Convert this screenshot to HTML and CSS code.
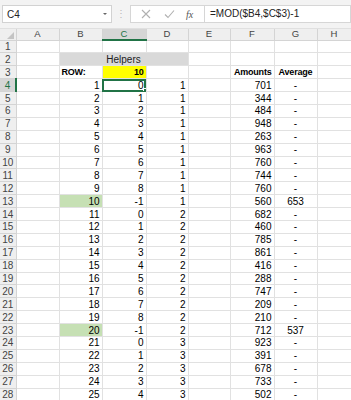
FILE: index.html
```html
<!DOCTYPE html>
<html>
<head>
<meta charset="utf-8">
<link rel="stylesheet" href="styles.css">
</head>
<body>
<div class="fbar">
  <div class="namebox"><span>C4</span><span class="caret"></span></div>
  <div class="dots">⋮</div>
  <div class="fbox">
    <div class="icons">
      <svg class="ic" width="10" height="10" viewBox="0 0 10 10"><path d="M1 1L9 9M9 1L1 9" stroke="#b0b0b0" stroke-width="1.1" fill="none"/></svg>
      <svg class="ic" width="11" height="10" viewBox="0 0 11 10"><path d="M1 5.5L4 8.5L10 1.5" stroke="#b0b0b0" stroke-width="1.1" fill="none"/></svg>
      <span class="fx">fx</span>
    </div>
    <div class="formula">=MOD($B4,$C$3)-1</div>
  </div>
</div>
<table class="sheet">
  <colgroup>
    <col class="w-rh"><col class="w43"><col class="w43"><col class="w44"><col class="w42"><col class="w42"><col class="w44"><col class="w43"><col class="w34">
  </colgroup>
  <tr class="hdr"><th class="corner"></th><th>A</th><th>B</th><th class="csel">C</th><th>D</th><th>E</th><th>F</th><th>G</th><th>H</th></tr>
  <tr><th>1</th><td></td><td></td><td></td><td></td><td></td><td></td><td></td><td></td></tr>
  <tr><th>2</th><td></td><td colspan="3" class="helpers">Helpers</td><td></td><td></td><td></td><td></td></tr>
  <tr><th>3</th><td></td><td class="b">ROW:</td><td class="n b yel">10</td><td></td><td></td><td class="b r">Amounts</td><td class="b c">Average</td><td></td></tr>
  <tr><th class="rsel">4</th><td></td><td class="n">1</td><td class="n sel">0</td><td class="n">1</td><td></td><td class="n">701</td><td class="c">-</td><td></td></tr>
  <tr><th>5</th><td></td><td class="n">2</td><td class="n">1</td><td class="n">1</td><td></td><td class="n">344</td><td class="c">-</td><td></td></tr>
  <tr><th>6</th><td></td><td class="n">3</td><td class="n">2</td><td class="n">1</td><td></td><td class="n">484</td><td class="c">-</td><td></td></tr>
  <tr><th>7</th><td></td><td class="n">4</td><td class="n">3</td><td class="n">1</td><td></td><td class="n">948</td><td class="c">-</td><td></td></tr>
  <tr><th>8</th><td></td><td class="n">5</td><td class="n">4</td><td class="n">1</td><td></td><td class="n">263</td><td class="c">-</td><td></td></tr>
  <tr><th>9</th><td></td><td class="n">6</td><td class="n">5</td><td class="n">1</td><td></td><td class="n">963</td><td class="c">-</td><td></td></tr>
  <tr><th>10</th><td></td><td class="n">7</td><td class="n">6</td><td class="n">1</td><td></td><td class="n">760</td><td class="c">-</td><td></td></tr>
  <tr><th>11</th><td></td><td class="n">8</td><td class="n">7</td><td class="n">1</td><td></td><td class="n">744</td><td class="c">-</td><td></td></tr>
  <tr><th>12</th><td></td><td class="n">9</td><td class="n">8</td><td class="n">1</td><td></td><td class="n">760</td><td class="c">-</td><td></td></tr>
  <tr><th>13</th><td></td><td class="n grn">10</td><td class="n">-1</td><td class="n">1</td><td></td><td class="n">560</td><td class="c">653</td><td></td></tr>
  <tr><th>14</th><td></td><td class="n">11</td><td class="n">0</td><td class="n">2</td><td></td><td class="n">682</td><td class="c">-</td><td></td></tr>
  <tr><th>15</th><td></td><td class="n">12</td><td class="n">1</td><td class="n">2</td><td></td><td class="n">460</td><td class="c">-</td><td></td></tr>
  <tr><th>16</th><td></td><td class="n">13</td><td class="n">2</td><td class="n">2</td><td></td><td class="n">785</td><td class="c">-</td><td></td></tr>
  <tr><th>17</th><td></td><td class="n">14</td><td class="n">3</td><td class="n">2</td><td></td><td class="n">861</td><td class="c">-</td><td></td></tr>
  <tr><th>18</th><td></td><td class="n">15</td><td class="n">4</td><td class="n">2</td><td></td><td class="n">416</td><td class="c">-</td><td></td></tr>
  <tr><th>19</th><td></td><td class="n">16</td><td class="n">5</td><td class="n">2</td><td></td><td class="n">288</td><td class="c">-</td><td></td></tr>
  <tr><th>20</th><td></td><td class="n">17</td><td class="n">6</td><td class="n">2</td><td></td><td class="n">747</td><td class="c">-</td><td></td></tr>
  <tr><th>21</th><td></td><td class="n">18</td><td class="n">7</td><td class="n">2</td><td></td><td class="n">209</td><td class="c">-</td><td></td></tr>
  <tr><th>22</th><td></td><td class="n">19</td><td class="n">8</td><td class="n">2</td><td></td><td class="n">210</td><td class="c">-</td><td></td></tr>
  <tr><th>23</th><td></td><td class="n grn">20</td><td class="n">-1</td><td class="n">2</td><td></td><td class="n">712</td><td class="c">537</td><td></td></tr>
  <tr><th>24</th><td></td><td class="n">21</td><td class="n">0</td><td class="n">3</td><td></td><td class="n">923</td><td class="c">-</td><td></td></tr>
  <tr><th>25</th><td></td><td class="n">22</td><td class="n">1</td><td class="n">3</td><td></td><td class="n">391</td><td class="c">-</td><td></td></tr>
  <tr><th>26</th><td></td><td class="n">23</td><td class="n">2</td><td class="n">3</td><td></td><td class="n">678</td><td class="c">-</td><td></td></tr>
  <tr><th>27</th><td></td><td class="n">24</td><td class="n">3</td><td class="n">3</td><td></td><td class="n">733</td><td class="c">-</td><td></td></tr>
  <tr><th>28</th><td></td><td class="n">25</td><td class="n">4</td><td class="n">3</td><td></td><td class="n">502</td><td class="c">-</td><td></td></tr>
</table>
</body>
</html>
```
FILE: styles.css
```css
html, body {
  margin: 0;
  padding: 0;
  background: #ffffff;
  overflow: hidden;
}
body {
  width: 351px;
  height: 400px;
  font-family: "Liberation Sans", Arial, sans-serif;
  font-size: 10px;
  color: #000;
}
.fbar {
  height: 29px;
  box-sizing: border-box;
  background: #f3f3f3;
  display: flex;
  align-items: flex-start;
  padding-top: 5px;
  border-bottom: 1px solid #e0e0e0;
}
.namebox {
  margin-left: 2px;
  width: 110px;
  height: 18px;
  box-sizing: border-box;
  background: #fff;
  border: 1px solid #d2d2d2;
  display: flex;
  align-items: center;
  justify-content: space-between;
  padding: 0 4px 0 4px;
  font-size: 10px;
  color: #222;
}
.caret {
  width: 0;
  height: 0;
  border-left: 2px solid transparent;
  border-right: 2px solid transparent;
  border-top: 2px solid #666;
}
.dots {
  width: 18px;
  text-align: center;
  color: #b8b8b8;
  font-size: 10px;
  line-height: 18px;
}
.fbox {
  flex: 1;
  height: 18px;
  display: flex;
  align-items: stretch;
}
.icons {
  width: 74px;
  box-sizing: border-box;
  background: #fff;
  border: 1px solid #d6d6d6;
  border-right: none;
  display: flex;
  align-items: center;
  padding-left: 10px;
  gap: 13px;
}
.fx {
  font-family: "Liberation Serif", serif;
  font-style: italic;
  font-size: 10px;
  color: #555;
  margin-left: -2px;
}
.formula {
  flex: 1;
  box-sizing: border-box;
  background: #fff;
  border: 1px solid #d6d6d6;
  padding-left: 5px;
  line-height: 16px;
  font-size: 10px;
  color: #222;
}
.sheet {
  border-collapse: collapse;
  table-layout: fixed;
  width: 351px;
}
.w-rh { width: 16px; }
.w43 { width: 43px; }
.w44 { width: 44px; }
.w42 { width: 42px; }
.w34 { width: 34px; }
.sheet tr { height: 12.9px; }
.sheet tr.hdr { height: 11px; }
.sheet td, .sheet th {
  padding: 0 2px;
  height: 12.9px;
  line-height: 11px;
  border-right: 1px solid #e1e1e1;
  border-bottom: 1px solid #e1e1e1;
  white-space: nowrap;
  overflow: hidden;
  box-sizing: border-box;
  font-size: 10px;
}
.sheet th {
  background: #efefef;
  font-weight: normal;
  color: #444;
  text-align: center;
  border-right: 1px solid #d4d4d4;
  border-bottom: 1px solid #d4d4d4;
  padding: 0;
}
.sheet tr.hdr th {
  height: 11px;
  line-height: 10px;
  font-size: 9.5px;
}
.sheet th.corner {
  position: relative;
}
.sheet th.corner::after {
  content: "";
  position: absolute;
  right: 2px;
  bottom: 1px;
  width: 0;
  height: 0;
  border-left: 7px solid transparent;
  border-bottom: 7px solid #c4c4c4;
}
.sheet th.csel {
  background: #d6d6d6;
  border-bottom: 2px solid #217346;
  color: #217346;
}
.sheet th.rsel {
  background: #d6d6d6;
  border-right: 2px solid #217346;
  color: #217346;
}
.n { text-align: right; }
.c { text-align: center; }
.r { text-align: right; }
.b { font-weight: bold; }
.sheet td.b {
  font-size: 9px;
  letter-spacing: -0.2px;
}
.helpers {
  background: #d9d9d9;
  text-align: center;
  color: #222;
}
.yel { background: #ffff00; }
.grn { background: #c6e0b4; }
.sheet td.sel {
  position: relative;
  outline: 2px solid #217346;
  outline-offset: -2px;
}
.sheet td.sel::after {
  content: "";
  position: absolute;
  right: -3px;
  bottom: -3px;
  width: 4px;
  height: 4px;
  background: #217346;
  border: 1px solid #fff;
  z-index: 2;
}
```
